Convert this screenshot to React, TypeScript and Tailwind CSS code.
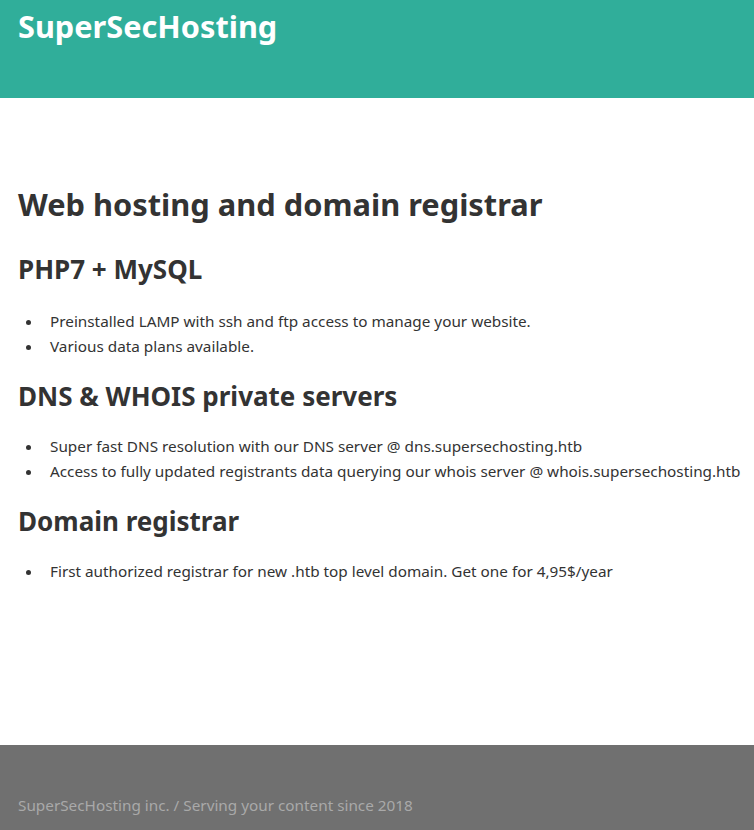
const Item = ({ children }: { children: React.ReactNode }) => (
  <li className="flex items-center whitespace-nowrap">
    <span className="ml-[8px] mr-[19px] mt-[2px] h-[5px] w-[5px] shrink-0 rounded-full bg-[#333333]" />
    <span>{children}</span>
  </li>
);

export default function App() {
  return (
    <div className="min-h-[830px] flex flex-col bg-white text-[#333333]" style={{ fontFamily: '"Noto Sans", "Open Sans", sans-serif' }}>
      <header className="h-[98px] bg-[#30ae9a] px-[18px] pt-[4px]">
        <h1 className="text-[30.7px] font-bold text-white leading-[44px]">SuperSecHosting</h1>
      </header>

      <main className="flex-1 px-[18px] pt-[84px]">
        <h1 className="text-[30.8px] font-bold leading-[44px]">Web hosting and domain registrar</h1>

        <h2 className="mt-[25px] text-[26px] font-bold leading-[36px]">PHP7 + MySQL</h2>
        <ul className="mt-[22px] text-[15.3px] leading-[25px]">
          <Item>Preinstalled LAMP with ssh and ftp access to manage your website.</Item>
          <Item>Various data plans available.</Item>
        </ul>

        <h2 className="mt-[19px] text-[26px] font-bold leading-[36px]">DNS &amp; WHOIS private servers</h2>
        <ul className="mt-[20px] text-[15.3px] leading-[25px]">
          <Item>Super fast DNS resolution with our DNS server @ dns.supersechosting.htb</Item>
          <Item>Access to fully updated registrants data querying our whois server @ whois.supersechosting.htb</Item>
        </ul>

        <h2 className="mt-[19px] text-[26px] font-bold leading-[36px]">Domain registrar</h2>
        <ul className="mt-[20px] text-[15.3px] leading-[25px]">
          <Item>First authorized registrar for new .htb top level domain. Get one for 4,95$/year</Item>
        </ul>
      </main>

      <footer className="h-[85px] bg-[#707070] px-[18px] pt-[49px]">
        <p className="text-[15.3px] leading-[22px] text-[#a9a9a9]">SuperSecHosting inc. / Serving your content since 2018</p>
      </footer>
    </div>
  );
}
